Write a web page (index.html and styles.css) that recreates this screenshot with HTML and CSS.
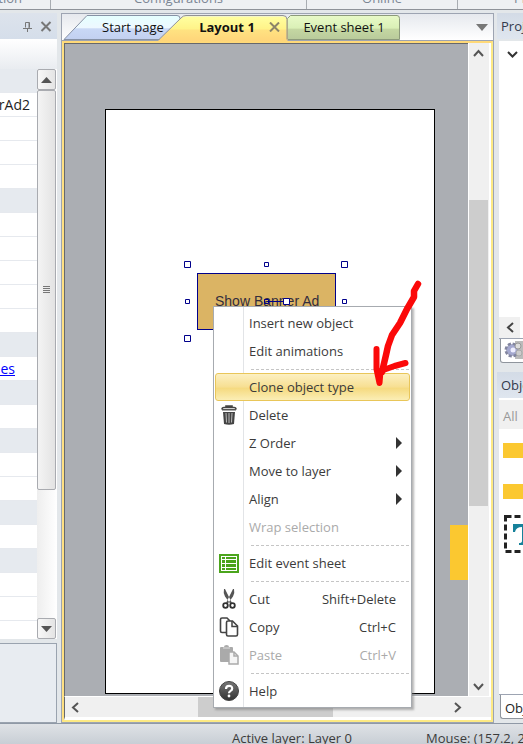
FILE: index.html
```
<!DOCTYPE html>
<html lang="en">
<head>
<meta charset="utf-8">
<title>Layout 1</title>
<link rel="stylesheet" href="styles.css">
</head>
<body>
<div class="app">
  <header class="ribbon">
    <div class="ribbon-group group-a"><span>Selection</span></div>
    <div class="ribbon-group group-b"><span>Configurations</span></div>
    <div class="ribbon-group group-c"><span>Online</span></div>
    <div class="ribbon-group group-d"><span>Preview</span></div>
  </header>

  <main class="workspace">
    <aside class="properties">
      <div class="panel-title">
        <button class="icon-button" aria-label="Pin"><svg width="9" height="11" viewBox="0 0 9 11"><path d="M2.500 6.500V1.500h4v5M0 7.500h9M4.500 8v3M6 2v5" fill="none" stroke="#777"/></svg></button>
        <button class="icon-button" aria-label="Close"><svg width="12" height="11" viewBox="0 0 12 11"><path d="M1.500 1l9 9M10.500 1l-9 9" stroke="#777" stroke-width="2"/></svg></button>
      </div>
      <div class="panel-head"></div>
      <div class="property-area">
        <ul class="property-list">
          <li class="category"></li>
          <li class="value"><span>BannerAd2</span></li><li></li><li></li><li></li>
          <li class="category"></li>
          <li></li><li></li><li></li><li></li><li></li>
          <li class="category"></li>
          <li class="value"><a href="#properties">Properties</a></li>
          <li class="category"></li><li></li>
          <li class="category"></li><li></li><li></li>
          <li class="category"></li><li></li>
          <li class="category"></li><li></li><li></li><li></li>
        </ul>
        <div class="bar">
          <button class="bar-button" aria-label="Scroll up"><svg width="11" height="6"><path d="M0 6L5.500 0 11 6z" fill="#555"/></svg></button>
          <div class="bar-thumb"><svg width="7" height="8"><path d="M0 .5h7M0 2.500h7M0 4.500h7M0 6.500h7" stroke="#777"/></svg></div>
          <div class="bar-space"></div>
          <button class="bar-button" aria-label="Scroll down"><svg width="11" height="6"><path d="M0 0L5.500 6 11 0z" fill="#555"/></svg></button>
        </div>
      </div>
      <div class="property-help"></div>
    </aside>

    <section class="editor">
      <nav class="tabs">
        <svg class="tab-shapes" width="340" height="27" viewBox="0 0 340 27">
          <defs>
            <linearGradient id="blue" x2="0" y2="1"><stop offset="0" stop-color="#e5ffff"/><stop offset=".5" stop-color="#edf8ff"/><stop offset=".56" stop-color="#c9d8f5"/><stop offset="1" stop-color="#c2d0f0"/></linearGradient>
            <linearGradient id="gold" x2="0" y2="1"><stop offset="0" stop-color="#ffffa0"/><stop offset=".5" stop-color="#fff389"/><stop offset=".56" stop-color="#ffe281"/><stop offset="1" stop-color="#ffd57a"/></linearGradient>
            <linearGradient id="green" x2="0" y2="1"><stop offset="0" stop-color="#e8fac8"/><stop offset=".52" stop-color="#daf0b6"/><stop offset=".58" stop-color="#c4d7a2"/><stop offset="1" stop-color="#b9ca9b"/></linearGradient>
          </defs>
          <path d="M2 25.500L25 1.500H115q3 0 3 3V25.500z" fill="url(#blue)" stroke="#8792a5"/>
          <path d="M225.500 25.500V4.500l3-3H335q2.500 0 2.500 3V25.500z" fill="url(#green)" stroke="#8c9a7b"/>
          <path d="M96 27L121 2.500H223l2.500 2.500V27z" fill="url(#gold)"/>
          <path d="M97 25.500L119 4q2-2.500 5-2.500h97q4 0 4 4v20" fill="none" stroke="#929294"/>
        </svg>
        <button class="tab tab-start">Start page</button>
        <button class="tab tab-layout">Layout 1</button>
        <button class="icon-button tab-close" aria-label="Close Layout 1"><svg width="11" height="10" viewBox="0 0 11 10"><path d="M1 .5l9 9M10 .5l-9 9" stroke="#8c8469" stroke-width="2"/></svg></button>
        <button class="tab tab-events">Event sheet 1</button>
        <button class="icon-button tab-menu" aria-label="List tabs"><svg width="12" height="7"><path d="M0 0h12L6 7z" fill="#777"/></svg></button>
      </nav>
      <div class="frame">
        <div class="canvas">
          <div class="page"></div>
          <div class="offpage"></div>
          <div class="sprite">Show Banner Ad</div>
          <svg class="selection" width="164" height="82" viewBox="0 0 164 82">
            <g fill="#fff" stroke="#00008b">
              <path d="M83 41.500h16"/>
              <path d="M.5 1.500h6v6h-6zM157.500 1.500h6v6h-6zM.5 75.500h6v6h-6zM99.500 38.500h6v6h-6z"/>
              <path d="M80.500 2.500h4v4h-4zM1.500 39.500h4v4h-4zM158.500 39.500h4v4h-4z"/>
              <path d="M80.500 39.500h4v4h-4z" fill="none"/>
            </g>
          </svg>
        </div>
        <div class="vscroll">
          <button class="icon-button" aria-label="Up"><svg width="11" height="8"><path d="M1 7l4.500-5L10 7" fill="none" stroke="#555" stroke-width="2"/></svg></button>
          <div class="vthumb"></div>
          <button class="icon-button" aria-label="Down"><svg width="11" height="8"><path d="M1 1l4.500 5L10 1" fill="none" stroke="#555" stroke-width="2"/></svg></button>
        </div>
        <div class="hscroll">
          <button class="icon-button" aria-label="Left"><svg width="8" height="11"><path d="M7 1L2 5.500 7 10" fill="none" stroke="#555" stroke-width="2"/></svg></button>
          <div class="hthumb"></div>
          <button class="icon-button" aria-label="Right"><svg width="8" height="11"><path d="M1 1l5 4.500L1 10" fill="none" stroke="#555" stroke-width="2"/></svg></button>
        </div>
      </div>
    </section>

    <aside class="side">
      <h2 class="side-title">Projects</h2>
      <div class="tree">
        <svg class="chevron" width="11" height="7"><path d="M1 1l4.500 4.500L10 1" fill="none" stroke="#333" stroke-width="2"/></svg>
        <div class="tree-scroll"><button class="icon-button" aria-label="Scroll left"><svg width="8" height="11"><path d="M7 1L2 5.500 7 10" fill="none" stroke="#444" stroke-width="2"/></svg></button></div>
      </div>
      <div class="side-tab">
        <svg width="20" height="18" viewBox="0 0 20 18"><path d="M12 0h8v18h-8z" fill="#bbb"/><circle cx="9" cy="9" r="6" fill="#a9acc9" stroke="#82859f" stroke-width="3" stroke-dasharray="3 1.700"/><circle cx="9" cy="9" r="5" fill="#a4a8cf"/><circle cx="10" cy="9" r="2.500" fill="#eef"/><circle cx="15" cy="5" r="3" fill="#ddd" stroke="#999"/><circle cx="16" cy="12" r="3" fill="#ccc" stroke="#aaa"/></svg>
      </div>
      <h2 class="side-title objects-title">Objects</h2>
      <div class="objects">
        <div class="filter">All</div>
        <div class="swatch"></div>
        <div class="swatch"></div>
        <svg class="text-object" width="38" height="38" viewBox="0 0 38 38"><path d="M1.500 1.500h35v35h-35z" fill="none" stroke="#222" stroke-width="3" stroke-dasharray="6 3"/><path d="M9 9h22v8h-2q-1-5-7-5v14q0 2 3 2v2H15v-2q3 0 3-2V12q-6 0-7 5H9z" fill="#16819a"/></svg>
      </div>
      <div class="bottom-tab">Objects</div>
    </aside>
  </main>

  <footer class="status"><span class="active-layer">Active layer: Layer 0</span><span class="mouse">Mouse: (157.2, 262.5)</span></footer>
</div>

<div class="menu" role="menu">
  <button role="menuitem"><i></i><span>Insert new object</span></button>
  <button role="menuitem"><i></i><span>Edit animations</span></button>
  <hr>
  <button role="menuitem" class="hot"><i></i><span>Clone object type</span></button>
  <button role="menuitem"><i><svg width="16" height="20" viewBox="0 0 16 20"><path d="M5 2.500V1h6v1.500M1 4.500q0-2 2-2h10q2 0 2 2" fill="none" stroke="#444" stroke-width="1.600"/><path d="M1 4h14v1.500H1z" fill="#555"/><path d="M2 7h12l-1 12q-5 1.500-10 0z" fill="#444"/><path d="M5 8l.5 9.500M8 8v10M11 8l-.5 9.500" stroke="#bbb"/></svg></i><span>Delete</span></button>
  <button role="menuitem"><i></i><span>Z Order</span><b></b></button>
  <button role="menuitem"><i></i><span>Move to layer</span><b></b></button>
  <button role="menuitem"><i></i><span>Align</span><b></b></button>
  <button role="menuitem" disabled><i></i><span>Wrap selection</span></button>
  <hr>
  <button role="menuitem"><i><svg width="20" height="19" viewBox="0 0 20 19"><path d="M1 1h18v17H1z" fill="#fff" stroke="#4ba51c" stroke-width="2"/><path d="M3 3h3v2H3zM7 3h10v2H7zM3 6h3v3H3zM7 6h10v3H7zM3 10h3v3H3zM7 10h10v3H7zM3 14h3v2H3zM7 14h10v2H7z" fill="#4aa31b"/></svg></i><span>Edit event sheet</span></button>
  <hr>
  <button role="menuitem"><i><svg width="14" height="20" viewBox="0 0 14 20"><path d="M2 0Q1 4 3 7.500L8.500 15l1.500-1L3 0zM12 0q1 4-1 7.500L5.500 15 4 14 11 0z" fill="#555"/><circle cx="3.500" cy="16.500" r="2.300" fill="#fff" stroke="#333" stroke-width="1.800"/><circle cx="10.500" cy="16.500" r="2.300" fill="#fff" stroke="#333" stroke-width="1.800"/></svg></i><span>Cut</span><kbd>Shift+Delete</kbd></button>
  <button role="menuitem"><i><svg width="20" height="20" viewBox="0 0 20 20"><path d="M7 15.500H3q-1.500 0-1.500-1.500V2.500Q1.500 1 3 1h5l3 3" fill="#fff" stroke="#444" stroke-width="1.600"/><path d="M7.500 5.500q0-1.500 1.500-1.500h4.500l5 5v8.500q0 1.500-1.500 1.500H9q-1.500 0-1.500-1.500z" fill="#fff" stroke="#444" stroke-width="1.600"/><path d="M13 4v5.500h5.500" fill="none" stroke="#444" stroke-width="1.500"/></svg></i><span>Copy</span><kbd>Ctrl+C</kbd></button>
  <button role="menuitem" disabled><i><svg width="20" height="20" viewBox="0 0 20 20"><path d="M1 3q0-1 1-1h3q0-2 2.500-2T10 2h3q1 0 1 1v14H2q-1 0-1-1z" fill="#aaa"/><path d="M4 3h7" stroke="#ddd"/><path d="M10 7h5l4 4v8h-9z" fill="#f5f5f5" stroke="#aaa" stroke-width="1.500"/><path d="M15 7v4h4" fill="none" stroke="#aaa" stroke-width="1.500"/></svg></i><span>Paste</span><kbd>Ctrl+V</kbd></button>
  <hr>
  <button role="menuitem"><i><svg width="20" height="20" viewBox="0 0 20 20"><defs><linearGradient id="help" x2="0" y2="1"><stop stop-color="#777"/><stop offset="1" stop-color="#333"/></linearGradient></defs><circle cx="10" cy="10" r="9.500" fill="url(#help)" stroke="#444"/><path d="M7 8q0-3.200 3.100-3.200T13.200 7.500q0 1.500-1.600 2.400T10 12.300" fill="none" stroke="#fff" stroke-width="2.200"/><circle cx="10" cy="15" r="1.400" fill="#fff"/></svg></i><span>Help</span></button>
</div>

<svg class="arrow" width="52" height="112" viewBox="0 0 52 112"><g fill="none" stroke="#fb0909" stroke-linecap="round" stroke-linejoin="round"><path d="M46 5l-4 7v6l-7 12-7 14-8 12-4 11-2 9-4 17" stroke-width="6.500"/><path d="M4.500 70v20l3 14 1-12 14-5 11-3" stroke-width="6"/></g></svg>
</body>
</html>
```
FILE: styles.css
```
* { box-sizing: border-box; }
body { margin: 0; font: 13px/18px "Open Sans", "Noto Sans", sans-serif; color: #1e1e1e; overflow: hidden; }
button { font: inherit; color: inherit; background: none; border: 0; padding: 0; margin: 0; }
svg { display: block; }
h2 { margin: 0; font: inherit; }

.app { display: grid; grid-template-rows: 10px 1fr 21px; height: 100vh; background: #e3e7ea; }

.ribbon { display: grid; grid-template-columns: 51px 256px 151px 1fr; overflow: hidden; background: #eef0f3; border-bottom: 1px solid #8e9299; color: #7b8594; }
.ribbon-group { display: flex; align-items: flex-end; justify-content: center; border-right: 1px solid #a8acb2; min-width: 0; height: 9px; padding-bottom: 2px; }
.group-a { justify-content: flex-end; padding-right: 28px; }
.group-d { justify-content: flex-start; padding-left: 56px; border: 0; }

.workspace { display: grid; grid-template-columns: 57px 1fr 25px; column-gap: 4px; padding-top: 3px; min-height: 0; }

.properties { display: grid; grid-template-rows: 26px 30px 1fr 4px 80px; min-width: 0; min-height: 0; }
.panel-title { display: flex; align-items: center; justify-content: flex-end; gap: 8px; padding-right: 5px; background: linear-gradient(#dde3ec, #d5deea); }
.icon-button { display: flex; align-items: center; justify-content: center; }
.panel-head { background: linear-gradient(#fff, #e9ecf0); }
.property-area { display: grid; grid-template-columns: 37px 20px; min-height: 0; overflow: hidden; background: #fff; }
.property-list { margin: 0; padding: 0; list-style: none; min-height: 0; overflow: hidden; font-size: 14px; }
.property-list li { height: 24px; border-bottom: 1px solid #e6e9ee; }
.property-list .category { background: #e6eaef; }
.value { display: flex; align-items: center; justify-content: flex-end; padding-right: 7px; }
.value:has(a) { padding-right: 22px; }
.value a { color: #00f; }
.bar { display: flex; flex-direction: column; background: linear-gradient(90deg, #eee, #fff); padding-right: 1px; }
.bar-button { display: flex; align-items: center; justify-content: center; height: 21px; border: 1px solid #a9abb0; border-radius: 2px; background: linear-gradient(90deg, #f8f8f8, #e4e4e4); }
.bar-thumb { flex: 400; display: flex; align-items: center; justify-content: center; border: 1px solid #a9abb0; border-radius: 2px; background: linear-gradient(90deg, #f4f4f4, #e3e3e3); }
.bar-space { flex: 128; }
.property-help { grid-row: 5; border: 1px solid #9aa3af; border-left: 0; background: #e8ecf1; }

.editor { display: grid; grid-template-rows: 27px 1fr; border: 1px solid #9da4b2; min-width: 0; min-height: 0; }
.tabs { position: relative; display: flex; align-items: center; background: linear-gradient(#e6e9ee, #fff); border-bottom: 1px solid #9da4b2; }
.tab-shapes { position: absolute; left: 0; top: 0; }
.tab { position: relative; text-align: center; white-space: nowrap; color: #111; }
.tab-start { margin-left: 39px; width: 64px; }
.tab-layout { margin-left: 33px; width: 58px; font-weight: 700; }
.tab-close { position: relative; width: 16px; margin-left: 10px; }
.tab-events { margin-left: 20px; width: 84px; }
.tab-menu { margin-left: auto; margin-right: 5px; }
.frame { display: grid; grid-template-columns: 1fr 23px; grid-template-rows: 1fr 24px; border: 2px solid #fdea84; border-top-color: #ffd978; border-left-color: #fee082; background: #f0f0f0; min-height: 0; }
.canvas { position: relative; overflow: hidden; border: 1px solid #66686c; border-width: 1px 0 0 1px; background: #abaeb3; }
.page { position: absolute; left: 40px; top: 65px; width: 330px; height: 585px; border: 1px solid #000; background: #fff; }
.offpage { position: absolute; left: 385px; top: 481px; width: 18px; height: 55px; background: #fbc830; }
.sprite { position: absolute; left: 132px; top: 229px; width: 139px; height: 57px; border: 1px solid #00008b; background: #dbb464; color: #332d3d; font: 14px/54px "Liberation Sans", sans-serif; padding-left: 17px; white-space: nowrap; }
.selection { position: absolute; left: 119px; top: 216px; }
.vscroll { display: grid; grid-template-rows: 19px 138px 306px 1fr 19px; border-left: 1px solid #fff; border-right: 2px solid #fff; padding-right: 1px; min-height: 0; }
.vthumb { grid-row: 3; background: #cdcdcd; }
.vscroll button:last-child { grid-row: 5; }
.hscroll { grid-column: 1 / 3; display: grid; grid-template-columns: 20px 113px 135px 1fr 20px 23px; border-top: 1px solid #fff; border-bottom: 3px solid #fff; border-left: 1px solid #66686c; }
.hthumb { grid-column: 3; background: #cdcdcd; }
.hscroll button:last-child { grid-column: 5; }

.side { display: grid; grid-template-rows: 26px 300px 24px 9px 26px 1fr 28px; margin-left: -1px; overflow: hidden; min-width: 0; min-height: 0; }
.side-title { padding: 4px 0 0 4px; background: linear-gradient(#d3dbe6, #dfe6ef); color: #333a4d; white-space: nowrap; }
.tree { display: flex; flex-direction: column; justify-content: space-between; margin: 2px 0 0 2px; padding-top: 10px; background: #fff; border-bottom: 1px solid #9da4b2; }
.chevron { margin-left: 8px; }
.tree-scroll { display: flex; width: 21px; height: 21px; background: #f0f0f0; justify-content: center; }
.side-tab { margin-left: 3px; border: 1px solid #8f959d; border-top: 0; border-radius: 0 0 0 3px; background: #fff; padding: 2px; overflow: hidden; }
.objects-title { grid-row: 5; }
.objects { grid-row: 6; display: flex; flex-direction: column; align-items: flex-start; margin-left: 2px; background: #fff; border-bottom: 1px solid #9da4b2; overflow: hidden; }
.filter { width: 100%; height: 31px; padding: 7px 0 0 4px; border-top: 2px solid #fff; background: #f0f0f0; color: #999; }
.swatch { flex: none; width: 30px; height: 15px; margin: 14px 0 12px 4px; background: #fbc830; }
.text-object { flex: none; margin: 4px 0 0 5px; }
.bottom-tab { grid-row: 7; margin: 0 0 4px 3px; padding: 4px 0 0 4px; border-left: 1px solid #8f959d; border-bottom: 1px solid #8f959d; border-radius: 0 0 0 3px; background: #fff; white-space: nowrap; overflow: hidden; }

.status { display: grid; grid-template-columns: 232px 194px 1fr; border-top: 1px solid #8f99a6; background: linear-gradient(#dfe2e6, #c8ced5); color: #3b3b3b; overflow: hidden; white-space: nowrap; }
.status span { padding-top: 5px; }
.active-layer { grid-column: 2; }

.menu { position: absolute; left: 213px; top: 306px; width: 199px; padding: 2px 1px; border: 1px solid #a7abb0; background: linear-gradient(90deg, #fff 29px, #e2e4e7 29px, #e2e4e7 30px, #fff 30px); box-shadow: 2px 2px 2px #7778; color: #3b3b3b; }
.menu button { display: grid; grid-template-columns: 30px 1fr auto; align-items: center; width: 100%; height: 28px; padding: 0 13px 0 0; border: 1px solid transparent; text-align: left; white-space: nowrap; column-gap: 3px; }
.menu i { display: flex; justify-content: center; padding-right: 5px; }
.menu b { border: 6px solid transparent; border-left-color: #333; border-right: 0; margin-right: -8px; }
.menu kbd { font: inherit; }
.menu button:disabled { color: #aaa; }
.menu .hot { border-color: #e9c659; border-radius: 3px; background: linear-gradient(#fcf0c2, #f7df92 50%, #f5da80 55%, #fbeeb5); }
.menu hr { height: 8px; margin: 0 0 0 36px; border: 0; background: repeating-linear-gradient(90deg, #c5c5c5 0 3px, transparent 3px 5px) 0 4px / 100% 1px no-repeat; }
.arrow { position: absolute; left: 372px; top: 279px; }
```
